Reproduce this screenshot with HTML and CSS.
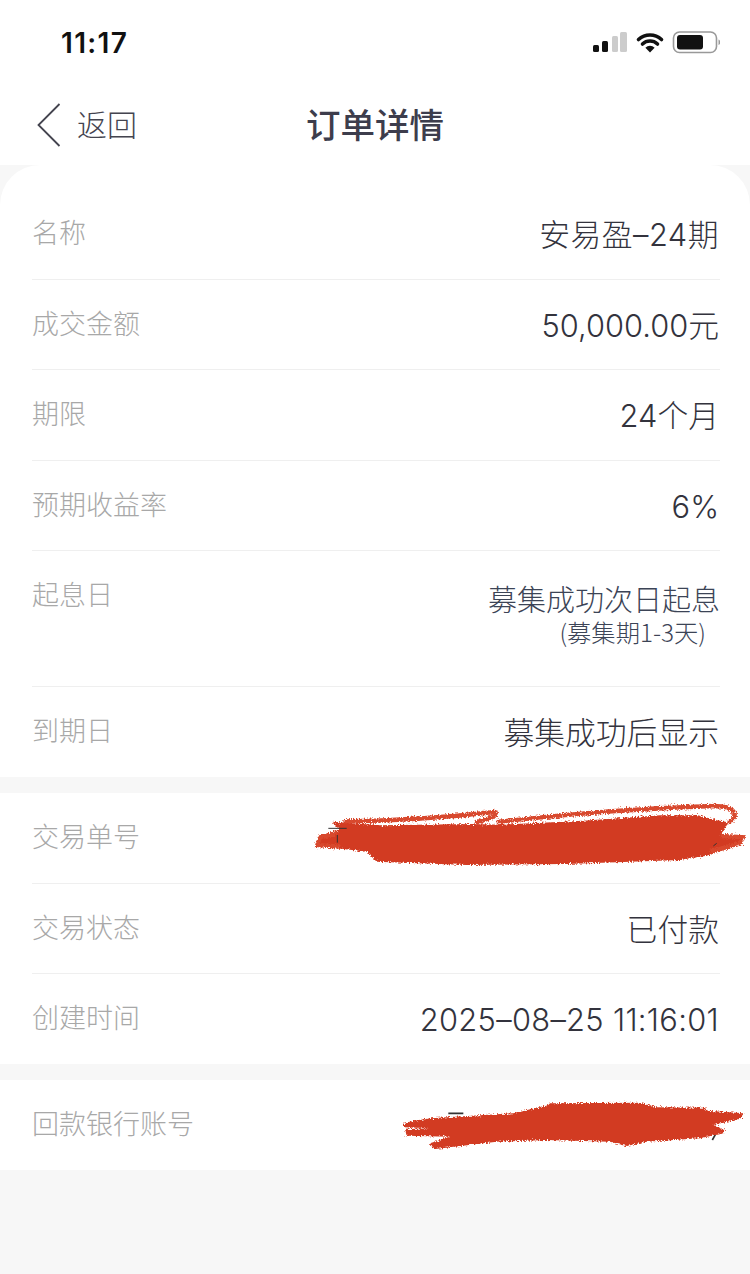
FILE: index.html
```html
<!DOCTYPE html>
<html lang="zh">
<head>
<meta charset="utf-8">
<title>订单详情</title>
<link rel="stylesheet" href="styles.css">
</head>
<body>
<svg class="defs" width="0" height="0" aria-hidden="true">
  <filter id="rough" x="-5%" y="-20%" width="110%" height="140%">
    <feTurbulence type="fractalNoise" baseFrequency="0.22" numOctaves="2" seed="4"/>
    <feDisplacementMap in="SourceGraphic" scale="16" xChannelSelector="R" yChannelSelector="G"/>
  </filter>
</svg>
<div class="page">
  <header class="top">
    <div class="status">
      <span class="time">11:17</span>
      <svg class="status-icons" width="129" height="24" viewBox="0 0 129 24">
        <rect x="2" y="14" width="6" height="7" rx="1.5" fill="#111"/>
        <rect x="11" y="10" width="6" height="11" rx="1.5" fill="#111"/>
        <rect x="21" y="5" width="6" height="16" rx="1.5" fill="#ccc"/>
        <rect x="29" y="1" width="7" height="20" rx="1.5" fill="#ccc"/>
        <path d="M47.5 8.5a17 17 0 0 1 23 0M51.5 13a11 11 0 0 1 15 0" fill="none" stroke="#111" stroke-width="3.6" stroke-linecap="round"/>
        <path d="M59 21.5l-4.6-4.8a6.6 6.6 0 0 1 9.2 0z" fill="#111"/>
        <rect x="82.5" y="1" width="43" height="20.5" rx="6" fill="none" stroke="#999" stroke-width="1.6"/>
        <rect x="86" y="4" width="26" height="14.5" rx="3" fill="#111"/>
        <path d="M127.500 8.500a3 3 0 0 1 0 5.500z" fill="#999"/>
      </svg>
    </div>
    <nav class="nav">
      <div class="back">
        <svg class="chevron" width="24" height="44" viewBox="0 0 24 44"><path d="M22.500 1L1.500 22l21 21" fill="none" stroke="#44444f" stroke-width="1.800"/></svg>
        <span class="back-text">返回</span>
      </div>
      <h1 class="title">订单详情</h1>
    </nav>
  </header>

  <main class="groups">
    <section class="card card-first">
      <div class="row row-first"><span class="label">名称</span><span class="value value-spaced">安易盈–24期</span></div>
      <div class="row"><span class="label">成交金额</span><span class="value">50,000.00元</span></div>
      <div class="row"><span class="label">期限</span><span class="value">24个月</span></div>
      <div class="row"><span class="label">预期收益率</span><span class="value">6%</span></div>
      <div class="row row-tall">
        <span class="label">起息日</span>
        <div class="value-stack">
          <span class="value value-blue">募集成功次日起息</span>
          <span class="sub">(募集期1-3天)</span>
        </div>
      </div>
      <div class="row"><span class="label">到期日</span><span class="value">募集成功后显示</span></div>
    </section>

    <section class="card">
      <div class="row">
        <span class="label">交易单号</span>
        <svg class="scribble scribble-a" width="450" height="100" viewBox="0 0 1350 300">
          <g filter="url(#rough)">
            <path d="M95 125L240 136L520 132L600 134L850 122L1080 106L1190 106L1285 128L1262 165L1330 175L1325 190L1230 225L1140 240L800 252L500 255L230 245L200 215L50 197L60 165L120 150Z" fill="#d23a20"/>
            <path d="M130 124C300 122 480 108 585 96C595 108 570 116 525 128M590 126C800 102 1050 84 1240 78C1312 78 1318 110 1285 128M1262 168L1328 172L1320 190L1230 215M110 160L60 172L52 195L120 200" fill="none" stroke="#d8492f" stroke-width="13"/>
          </g>
          <path d="M85 145H140M112 165V188M1240 198L1250 190" fill="none" stroke="#333" stroke-width="3"/>
        </svg>
      </div>
      <div class="row"><span class="label">交易状态</span><span class="value">已付款</span></div>
      <div class="row"><span class="label">创建时间</span><span class="value value-date">2025–08–25 11:16:01</span></div>
    </section>

    <section class="card">
      <div class="row">
        <span class="label">回款银行账号</span>
        <svg class="scribble scribble-b" width="370" height="110" viewBox="0 0 1110 330">
          <path d="M205 130H250M997 210L1008 190" fill="none" stroke="#333" stroke-width="5"/>
          <g filter="url(#rough)">
            <path d="M72 158L150 145L400 130L505 105L510 100L780 98L830 112L975 113L980 122L1090 130L1085 145L1000 165L1035 180L1030 190L960 205L800 215L740 228L690 215L500 210L350 215L160 238L150 220L210 200L80 197L75 178L150 175L72 172Z" fill="#d23a20"/>
          </g>
        </svg>
      </div>
    </section>
  </main>
</div>
</body>
</html>
```

FILE: styles.css
```css
* { box-sizing: border-box; }
html, body { margin: 0; padding: 0; }
body {
  width: 750px;
  height: 1274px;
  overflow: hidden;
  background: #f7f7f7;
  font-family: "Noto Sans CJK SC", "Noto Sans", sans-serif;
}
.defs { position: absolute; }
.page { width: 750px; }
.top { height: 165px; background: #fff; }
.status {
  height: 85px;
  padding: 0 30px 0 61px;
  display: flex;
  justify-content: space-between;
  align-items: center;
}
.time {
  font-family: Inter, "Liberation Sans", sans-serif;
  font-size: 28px;
  font-weight: 600;
  letter-spacing: 1.300px;
  color: #111;
}
.nav {
  height: 80px;
  padding: 0 37px;
  display: grid;
  grid-template-columns: 1fr auto 1fr;
  align-items: center;
}
.back {
  display: flex;
  align-items: center;
  gap: 16px;
  font-size: 30px;
  font-weight: 300;
  color: #44444f;
}
.back-text { margin-bottom: 4px; }
.chevron { flex: none; }
.title {
  margin: 0 0 5px;
  font-size: 34.500px;
  font-weight: 500;
  color: #3d3d4c;
}
.groups { display: flex; flex-direction: column; gap: 16px; }
.card { background: #fff; padding: 0 30px 0 32px; }
.card-first { border-radius: 40px 40px 0 0; }
.row {
  position: relative;
  height: 90.500px;
  display: flex;
  justify-content: space-between;
  align-items: flex-start;
  padding-top: 23px;
  border-bottom: 1.500px solid #efefef;
}
.card .row:last-child { height: 90px; border-bottom: 0; }
.row-first { height: 114.500px; padding-top: 47px; }
.row-tall { height: 136px; }
.label {
  font-size: 27px;
  line-height: 40px;
  font-weight: 300;
  color: #a8a8a8;
}
.value {
  font-family: Inter, "Noto Sans CJK SC", sans-serif;
  font-size: 30.800px;
  line-height: 40px;
  font-weight: 300;
  color: #33333d;
  white-space: nowrap;
  margin: 3px 1px 0 0;
}
.row-first .value { margin-top: 3px; }
.value-spaced { letter-spacing: 0.500px; }
.value-date { letter-spacing: 0.330px; }
.value-blue { font-size: 29px; color: #3c4456; line-height: 36px; margin: 9px 0 0; }
.value-stack {
  display: flex;
  flex-direction: column;
  align-items: flex-end;
}
.sub {
  font-size: 24.300px;
  line-height: 26px;
  font-weight: 300;
  color: #3c4456;
  margin-right: 14px;
}
.scribble { position: absolute; }
.scribble-a { left: 268px; top: -13px; }
.scribble-b { left: 348px; top: -10px; }
```
